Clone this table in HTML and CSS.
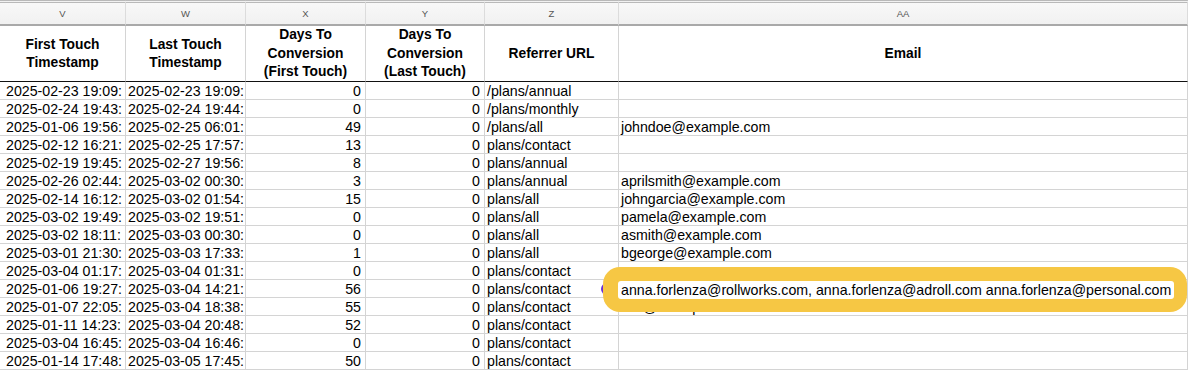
FILE: index.html
```html
<!DOCTYPE html>
<html lang="en">
<head>
<meta charset="utf-8">
<title>Sheet</title>
<link rel="stylesheet" href="styles.css">
</head>
<body>
<div class="wrap">
  <div class="sheet">
    <div class="col-letter">V</div>
    <div class="col-letter">W</div>
    <div class="col-letter">X</div>
    <div class="col-letter">Y</div>
    <div class="col-letter">Z</div>
    <div class="col-letter">AA</div>

    <div class="head">First Touch<br>Timestamp</div>
    <div class="head">Last Touch<br>Timestamp</div>
    <div class="head">Days To<br>Conversion<br>(First Touch)</div>
    <div class="head">Days To<br>Conversion<br>(Last Touch)</div>
    <div class="head">Referrer URL</div>
    <div class="head">Email</div>

    <div class="cell first">2025-02-23 19:09:</div><div class="cell">2025-02-23 19:09:</div><div class="cell num">0</div><div class="cell num">0</div><div class="cell">/plans/annual</div><div class="cell"></div>
    <div class="cell first">2025-02-24 19:43:</div><div class="cell">2025-02-24 19:44:</div><div class="cell num">0</div><div class="cell num">0</div><div class="cell">/plans/monthly</div><div class="cell"></div>
    <div class="cell first">2025-01-06 19:56:</div><div class="cell">2025-02-25 06:01:</div><div class="cell num">49</div><div class="cell num">0</div><div class="cell">/plans/all</div><div class="cell">johndoe@example.com</div>
    <div class="cell first">2025-02-12 16:21:</div><div class="cell">2025-02-25 17:57:</div><div class="cell num">13</div><div class="cell num">0</div><div class="cell">plans/contact</div><div class="cell"></div>
    <div class="cell first">2025-02-19 19:45:</div><div class="cell">2025-02-27 19:56:</div><div class="cell num">8</div><div class="cell num">0</div><div class="cell">plans/annual</div><div class="cell"></div>
    <div class="cell first">2025-02-26 02:44:</div><div class="cell">2025-03-02 00:30:</div><div class="cell num">3</div><div class="cell num">0</div><div class="cell">plans/annual</div><div class="cell">aprilsmith@example.com</div>
    <div class="cell first">2025-02-14 16:12:</div><div class="cell">2025-03-02 01:54:</div><div class="cell num">15</div><div class="cell num">0</div><div class="cell">plans/all</div><div class="cell">johngarcia@example.com</div>
    <div class="cell first">2025-03-02 19:49:</div><div class="cell">2025-03-02 19:51:</div><div class="cell num">0</div><div class="cell num">0</div><div class="cell">plans/all</div><div class="cell">pamela@example.com</div>
    <div class="cell first">2025-03-02 18:11:</div><div class="cell">2025-03-03 00:30:</div><div class="cell num">0</div><div class="cell num">0</div><div class="cell">plans/all</div><div class="cell">asmith@example.com</div>
    <div class="cell first">2025-03-01 21:30:</div><div class="cell">2025-03-03 17:33:</div><div class="cell num">1</div><div class="cell num">0</div><div class="cell">plans/all</div><div class="cell">bgeorge@example.com</div>
    <div class="cell first">2025-03-04 01:17:</div><div class="cell">2025-03-04 01:31:</div><div class="cell num">0</div><div class="cell num">0</div><div class="cell">plans/contact</div><div class="cell"></div>
    <div class="cell first">2025-01-06 19:27:</div><div class="cell">2025-03-04 14:21:</div><div class="cell num">56</div><div class="cell num">0</div><div class="cell">plans/contact</div><div class="cell"></div>
    <div class="cell first">2025-01-07 22:05:</div><div class="cell">2025-03-04 18:38:</div><div class="cell num">55</div><div class="cell num">0</div><div class="cell">plans/contact</div><div class="cell">sch@example.com</div>
    <div class="cell first">2025-01-11 14:23:</div><div class="cell">2025-03-04 20:48:</div><div class="cell num">52</div><div class="cell num">0</div><div class="cell">plans/contact</div><div class="cell"></div>
    <div class="cell first">2025-03-04 16:45:</div><div class="cell">2025-03-04 16:46:</div><div class="cell num">0</div><div class="cell num">0</div><div class="cell">plans/contact</div><div class="cell"></div>
    <div class="cell first">2025-01-14 17:48:</div><div class="cell">2025-03-05 17:45:</div><div class="cell num">50</div><div class="cell num">0</div><div class="cell">plans/contact</div><div class="cell"></div>
  </div>

  <div class="mark-dot"></div>
  <div class="callout">
    <div class="callout-text">anna.forlenza@rollworks.com, anna.forlenza@adroll.com anna.forlenza@personal.com</div>
  </div>
</div>
</body>
</html>
```

FILE: styles.css
```css
html, body {
  margin: 0;
  padding: 0;
  background: #ffffff;
}

body {
  font-family: "Liberation Sans", Arial, sans-serif;
  color: #000;
  overflow: hidden;
}

.wrap {
  position: relative;
  width: 1188px;
  height: 373px;
  overflow: hidden;
}

.sheet {
  display: grid;
  grid-template-columns: 126px 120px 120px 119px 134px 569px;
}

.col-letter {
  box-sizing: border-box;
  height: 26px;
  border-top: 3px double #b9b9b9;
  border-bottom: 2px solid #a9a9a9;
  border-right: 1px solid #dcdcdc;
  background: linear-gradient(#f8f8f8, #f1f1f1);
  font-size: 9.5px;
  line-height: 21px;
  color: #555;
  text-align: center;
}

.head {
  box-sizing: border-box;
  height: 56px;
  border-right: 1px solid #d4d4d4;
  border-bottom: 1px solid #111;
  display: flex;
  align-items: center;
  justify-content: center;
  text-align: center;
  font-weight: bold;
  font-size: 13.8px;
  line-height: 18.5px;
  padding-top: 1px;
}

.cell {
  box-sizing: border-box;
  height: 18px;
  border-right: 1px solid #d4d4d4;
  border-bottom: 1px solid #d4d4d4;
  font-size: 14.2px;
  line-height: 19px;
  padding: 0 2px;
  white-space: nowrap;
  overflow: hidden;
}

.cell.first {
  padding-left: 6px;
}

.cell.num {
  text-align: right;
  padding-right: 4px;
}

.mark-dot {
  position: absolute;
  left: 601px;
  top: 283px;
  width: 12px;
  height: 12px;
  border-radius: 50%;
  background: #6a2fd6;
}

.callout {
  position: absolute;
  left: 603px;
  top: 267px;
  width: 584px;
  height: 45px;
  box-sizing: border-box;
  padding: 14px 13px 13px 15px;
  background: #f6c744;
  border-radius: 17px;
}

.callout-text {
  background: #ffffff;
  border-radius: 3px;
  height: 18px;
  line-height: 18px;
  font-size: 14.2px;
  padding-left: 3px;
  white-space: nowrap;
  overflow: hidden;
}
```
